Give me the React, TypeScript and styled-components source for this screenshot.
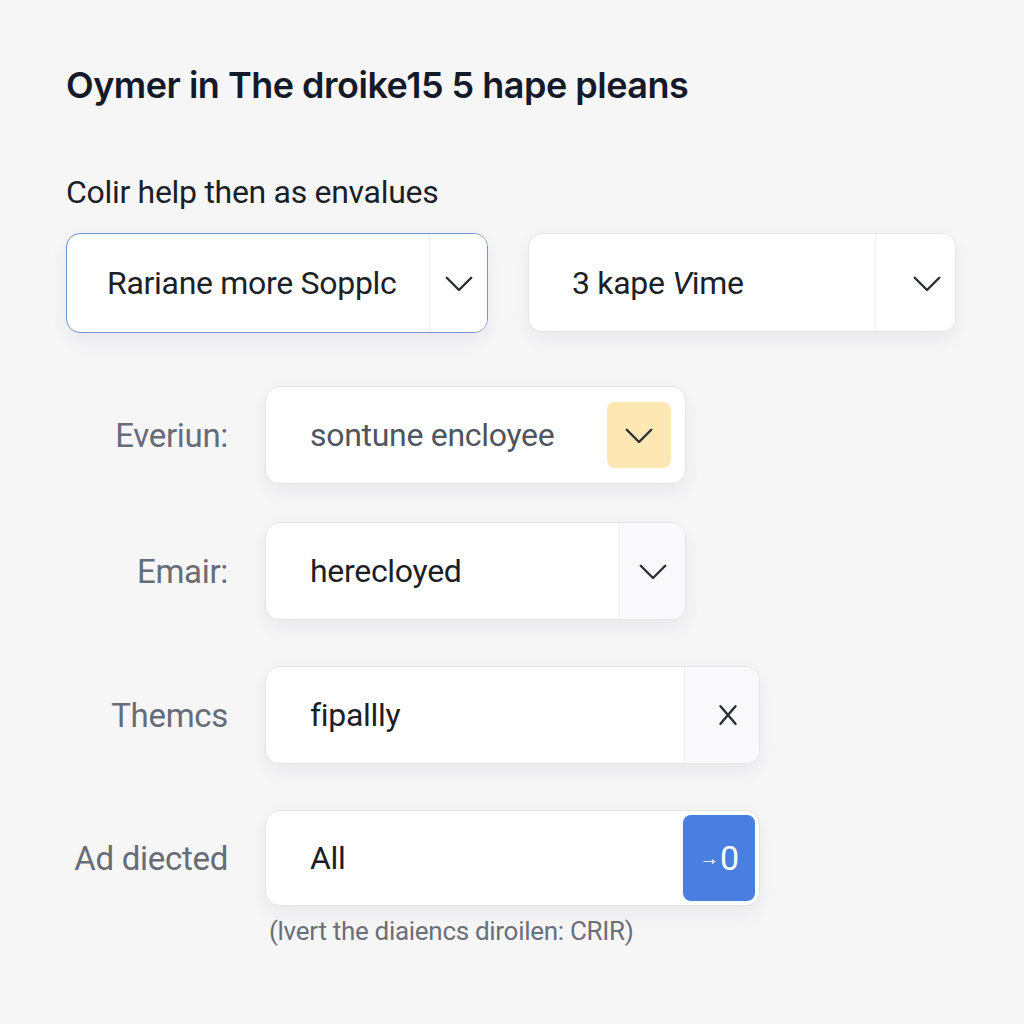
import React from 'react';
import styled, { createGlobalStyle } from 'styled-components';

const Global = createGlobalStyle`
  body {
    margin: 0;
    background: #f6f6f7;
    font-family: Roboto, "Liberation Sans", sans-serif;
  }
`;

const Page = styled.div`
  padding: 62px 0 60px 66px;
  min-height: 1024px;
  box-sizing: border-box;
`;

const Title = styled.h1`
  margin: 0;
  font-family: Inter, "Liberation Sans", sans-serif;
  font-size: 36px;
  font-weight: 600;
  letter-spacing: -0.5px;
  color: #141a2a;
  line-height: 46px;
`;

const Subtitle = styled.p`
  margin: 64px 0 0;
  font-size: 32px;
  letter-spacing: -0.3px;
  color: #1b1f27;
  line-height: 40px;
`;

const SelectRow = styled.div`
  display: flex;
  gap: 40px;
  margin-top: 21px;
`;

const Box = styled.div<{ $w: number; $h?: number; $focus?: boolean }>`
  display: flex;
  align-items: stretch;
  width: ${p => p.$w}px;
  height: ${p => p.$h || 98}px;
  box-sizing: border-box;
  background: #fff;
  border: ${p => (p.$focus ? '1.5px solid #6f92dc' : '1.5px solid #e3e4ea')};
  border-radius: 14px;
  box-shadow: 0 8px 18px rgba(30, 40, 60, 0.06);
  overflow: hidden;
`;

const Value = styled.div<{ $pad: number; $muted?: boolean }>`
  flex: 1;
  display: flex;
  align-items: center;
  padding-left: ${p => p.$pad}px;
  font-size: 32px;
  letter-spacing: -0.3px;
  white-space: pre;
  color: ${p => (p.$muted ? '#4f5560' : '#1c1f26')};
`;

const Addon = styled.div<{ $w: number; $shade?: boolean; $shift?: number }>`
  width: ${p => p.$w}px;
  box-sizing: border-box;
  padding-left: ${p => p.$shift || 0}px;
  display: flex;
  align-items: center;
  justify-content: center;
  border-left: 1px solid #eeeff3;
  background: ${p => (p.$shade ? '#f9f9fb' : '#fff')};
  color: #2b2f36;
`;

const InsetButton = styled.div<{ $bg: string; $w: number; $h: number; $m: number }>`
  align-self: center;
  margin-right: ${p => p.$m}px;
  width: ${p => p.$w}px;
  height: ${p => p.$h}px;
  border-radius: 8px;
  background: ${p => p.$bg};
  display: flex;
  align-items: center;
  justify-content: center;
  color: #fff;
  font-size: 34px;
`;

const Fields = styled.div`
  display: flex;
  flex-direction: column;
  margin-top: 53px;
`;

const FieldRow = styled.div<{ $gap: number }>`
  display: grid;
  grid-template-columns: 162px auto;
  column-gap: 37px;
  align-items: center;
  margin-top: ${p => p.$gap}px;
`;

const Label = styled.div`
  text-align: right;
  font-size: 33px;
  letter-spacing: -0.3px;
  color: #676c76;
`;

const Hint = styled.div`
  margin: 10px 0 0 203px;
  font-size: 26px;
  letter-spacing: -0.3px;
  color: #6a6f79;
`;

const Arrow = styled.span`
  font-size: 20px;
  margin-right: 1px;
`;

const Chevron = () => (
  <svg width="42" height="42" viewBox="0 0 24 24" fill="none" stroke="#2b2f36" strokeWidth="1.4" strokeLinecap="round" strokeLinejoin="round">
    <path d="M5 9l7 7 7-7" />
  </svg>
);

const Cross = () => (
  <svg width="30" height="30" viewBox="0 0 24 24" fill="none" stroke="#2b2f36" strokeWidth="2" strokeLinecap="round">
    <path d="M6 5l12 14M18 5L6 19" />
  </svg>
);

export default function App() {
  return (
    <Page>
      <Global />
      <Title>Oymer in The droike15 5 hape pleans</Title>
      <Subtitle>Colir help then as envalues</Subtitle>
      <SelectRow>
        <Box $w={422} $h={100} $focus>
          <Value $pad={40}>Rariane more Sopplc</Value>
          <Addon $w={58}><Chevron /></Addon>
        </Box>
        <Box $w={428} $h={99}>
          <Value $pad={43}><span>3 kape <i>V</i>ime</span></Value>
          <Addon $w={80} $shift={22}><Chevron /></Addon>
        </Box>
      </SelectRow>
      <Fields>
        <FieldRow $gap={0}>
          <Label>Everiun:</Label>
          <Box $w={421}>
            <Value $pad={44} $muted>sontune encloyee</Value>
            <InsetButton $bg="#fde7b3" $w={64} $h={66} $m={14}><Chevron /></InsetButton>
          </Box>
        </FieldRow>
        <FieldRow $gap={38}>
          <Label>Emair:</Label>
          <Box $w={421}>
            <Value $pad={44}>herecloyed</Value>
            <Addon $w={66} $shade><Chevron /></Addon>
          </Box>
        </FieldRow>
        <FieldRow $gap={46}>
          <Label>Themcs</Label>
          <Box $w={495}>
            <Value $pad={44}>fipallly</Value>
            <Addon $w={75} $shade $shift={12}><Cross /></Addon>
          </Box>
        </FieldRow>
        <FieldRow $gap={46}>
          <Label>Ad diected</Label>
          <Box $w={495} $h={96}>
            <Value $pad={44}>All</Value>
            <InsetButton $bg="#4a7fe1" $w={72} $h={86} $m={4}><Arrow>→</Arrow>0</InsetButton>
          </Box>
        </FieldRow>
        <Hint>(lvert the diaiencs diroilen: CRIR)</Hint>
      </Fields>
    </Page>
  );
}
